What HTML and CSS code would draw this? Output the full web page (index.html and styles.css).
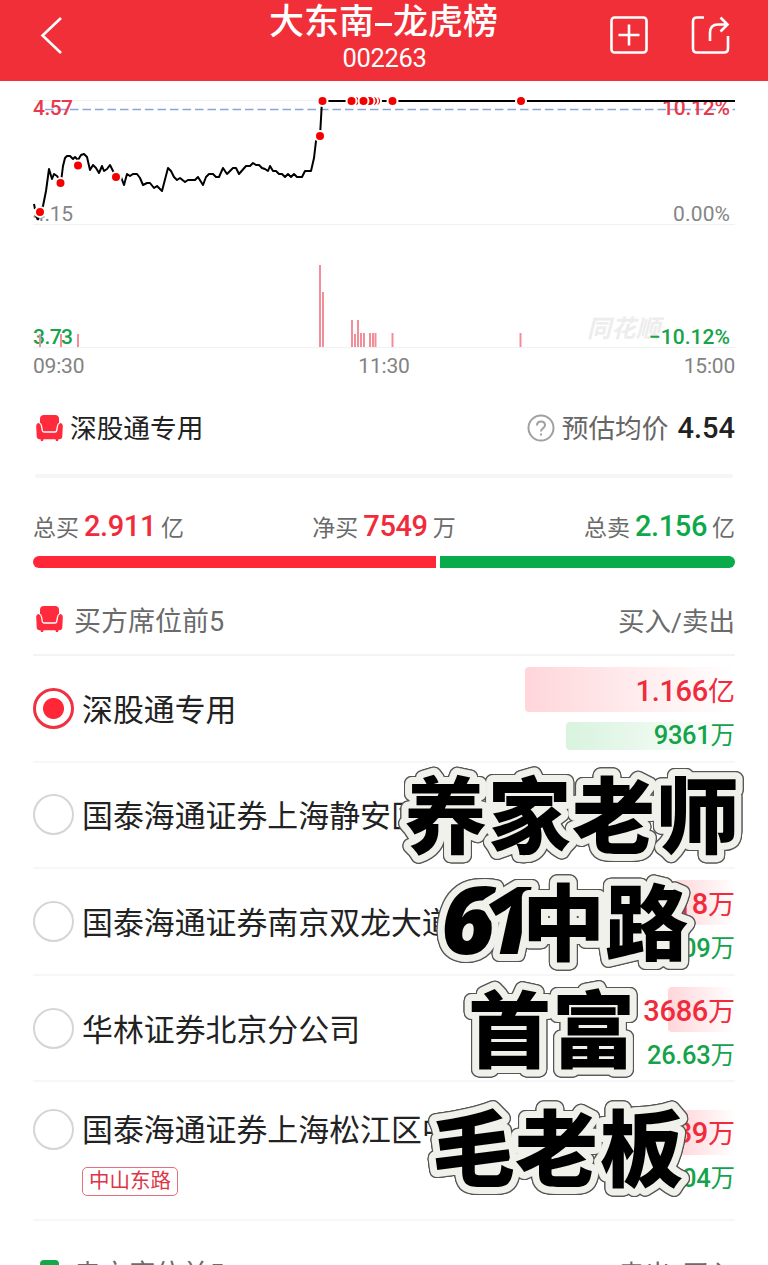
FILE: index.html
```html
<!DOCTYPE html>
<html lang="zh-CN">
<head>
    <meta charset="UTF-8">
    <meta name="viewport" content="width=device-width, initial-scale=1.0">
    <title>大东南-龙虎榜</title>
    <link rel="stylesheet" href="styles.css">
</head>
<body>

    <svg class="defs" width="0" height="0">
        <symbol id="seat" viewBox="0 0 27 27">
            <path d="M4 14V4Q4 0 8 0H19Q23 0 23 4V14L21 20H6Z"/>
            <path d="M2.500 8Q4.800 8 5.200 10L6.200 16.500H20.800L21.800 10Q22.200 8 24.500 8Q27 8.500 26.800 11.500L26.300 21.500Q26 24.300 23.500 24.300H22.500L22 26H20L19.500 24.300H7.500L7 26H5L4.500 24.300H3.500Q1 24.300 0.700 21.500L0.200 11.500Q0 8.500 2.500 8Z"/>
            <path d="M3.400 8Q5.200 8.600 5.500 11L6.300 15.500Q6.600 17 8 17H19Q20.400 17 20.700 15.500L21.500 11Q21.800 8.600 23.600 8" fill="none" stroke="#fff" stroke-width="1.300"/>
        </symbol>
    </svg>

    <header class="header">
        <svg class="back" width="24" height="40" viewBox="0 0 24 40">
            <path d="M21 3L2.500 20.500L21 38"/>
        </svg>
        <div class="title">
            <h1>大东南<span class="dash"></span>龙虎榜</h1>
            <p>002263</p>
        </div>
        <div class="actions">
            <svg width="38" height="38" viewBox="0 0 38 38">
                <rect x="1.500" y="1.500" width="35" height="35" rx="3"/>
                <path d="M8.500 19H29.500M19 8.500V29.500"/>
            </svg>
            <svg width="40" height="38" viewBox="0 0 40 38">
                <path d="M13 1.500H6Q2 1.500 2 5.500V32.500Q2 36.500 6 36.500H33Q37 36.500 37 32.500V20"/>
                <path d="M19 25V17Q19 8.500 27 8.500H36M29.500 1.500L36.500 8.500L29.500 15.500"/>
            </svg>
        </div>
    </header>

    <section class="chart">
        <svg width="768" height="269" viewBox="0 81 768 269">
            <g class="grid">
                <path d="M33 100.500H735M33 224.500H735M33 347.500H735"/>
            </g>
            <text class="mark" x="587" y="337" textLength="73">同花顺</text>
            <path class="dashed" d="M45 109.500H735"/>
            <text class="up" x="33" y="115" textLength="40">4.57</text>
            <text class="up" x="662" y="115" textLength="68">10.12%</text>
            <text x="33" y="221" textLength="40">4.15</text>
            <text x="673" y="221" textLength="57">0.00%</text>
            <text class="down" x="33" y="344" textLength="40">3.73</text>
            <text class="down" x="649" y="344" textLength="81">−10.12%</text>
            <path class="bars" d="M40 334V347M61 334V347M78 334V347M320 265V347M323 292V347M352 320V347M355 334V347M358 320V347M361 333V347M364 333V347M370 333V347M373 333V347M375.500 333V347M392.500 333V347M520.500 333V347"/>
            <path class="price" d="M34 204L35 209M36 216L38 220M38 220L40 212L43 206L46 191L49 169L52 179L54 174L57 176L61 182L63 166L65 158L67 156L70 156L73 159L75 157L78 160L81 155L84 154L87 157L90 170L93 165L96 168L99 173L102 166L104 171L107 169L110 165L113 171L116 177L121 177L124 185L127 174L130 176L133 174L137 174L140 178L143 185L147 183L150 183L154 188L157 186L162 191L168 168L171 171L174 177L177 180L180 178L185 182L188 180L195 180L198 177L203 185L206 177L209 174L213 174L216 177L219 177L223 168L227 174L233 168L236 168L239 174L246 166L250 166L253 163L256 165L259 165L262 168L265 169L268 171L270 166L273 171L276 171L279 174L282 174L285 177L288 174L291 177L294 174L297 177L302 177L305 171L311 171L314 158L316 141L320 136L322 101H735"/>
            <g class="dots">
                <circle cx="376" cy="101" r="5"/>
                <circle cx="373" cy="101" r="5"/>
                <circle cx="369.500" cy="101" r="5"/>
                <circle cx="355" cy="101" r="5"/>
                <circle cx="351.500" cy="101" r="5"/>
                <circle cx="363.500" cy="101" r="5"/>
                <circle cx="40" cy="212" r="5"/>
                <circle cx="60.500" cy="183" r="5"/>
                <circle cx="78" cy="165.500" r="5"/>
                <circle cx="116" cy="177" r="5"/>
                <circle cx="320" cy="136" r="5"/>
                <circle cx="322.500" cy="101" r="5"/>
                <circle cx="392.500" cy="101" r="5"/>
                <circle cx="521" cy="101" r="5"/>
            </g>
        </svg>
        <div class="times"><span>09:30</span><span>11:30</span><span>15:00</span></div>
    </section>

    <main class="content">
        <div class="summary">
            <svg class="seat"><use href="#seat"/></svg>
            <span>深股通专用</span>
            <div class="avg">
                <svg width="28" height="28" viewBox="0 0 28 28">
                    <circle cx="14" cy="14" r="12.500"/>
                    <path d="M10 11.500Q10 7.500 14 7.500T18 11.300Q18 13 16 14.300T14 17.500M14 19.500V21.500"/>
                </svg>
                <span>预估均价</span>
                <b>4.54</b>
            </div>
        </div>
        <div class="gap-line"></div>

        <div class="totals">
            <div>总买<b class="red">2.911</b>亿</div>
            <div>净买<b class="red">7549</b>万</div>
            <div>总卖<b class="green">2.156</b>亿</div>
        </div>
        <div class="ratio"><i class="buy"></i><i class="sell"></i></div>

        <div class="section-head">
            <svg class="seat"><use href="#seat"/></svg>
            <span>买方席位前5</span>
            <span class="right">买入/卖出</span>
        </div>

        <ul class="list">
            <li>
                <i class="radio on"></i>
                <div class="name">深股通专用</div>
                <div class="values">
                    <div class="v-buy"><i style="width:210px"></i><span><b>1.166</b>亿</span></div>
                    <div class="v-sell"><i style="width:169px"></i><span><b>9361</b>万</span></div>
                </div>
            </li>
            <li>
                <i class="radio"></i>
                <div class="name">国泰海通证券上海静安区</div>
                <div class="values">
                    <div class="v-buy"><i style="width:60px"></i><span><b>4892</b>万</span></div>
                    <div class="v-sell none"><span><b>0.00</b></span></div>
                </div>
            </li>
            <li>
                <i class="radio"></i>
                <div class="name">国泰海通证券南京双龙大道</div>
                <div class="values">
                    <div class="v-buy"><i style="width:60px"></i><span><b>4218</b>万</span></div>
                    <div class="v-sell"><span><b>25.09</b>万</span></div>
                </div>
            </li>
            <li>
                <i class="radio"></i>
                <div class="name">华林证券北京分公司</div>
                <div class="values">
                    <div class="v-buy"><i style="width:67px"></i><span><b>3686</b>万</span></div>
                    <div class="v-sell"><span><b>26.63</b>万</span></div>
                </div>
            </li>
            <li class="tall">
                <i class="radio"></i>
                <div class="name">国泰海通证券上海松江区中<em>中山东路</em></div>
                <div class="values">
                    <div class="v-buy"><i style="width:56px"></i><span><b>3139</b>万</span></div>
                    <div class="v-sell"><span><b>16.04</b>万</span></div>
                </div>
            </li>
        </ul>

        <div class="section-head sell-head">
            <svg class="seat"><use href="#seat"/></svg>
            <span>卖方席位前5</span>
            <span class="right">卖出/买入</span>
        </div>
    </main>

    <!-- 手写贴纸 -->
    <svg class="stickers" width="368" height="440" viewBox="400 765 368 440">
        <text x="404 488 572 656" y="847">养家老师</text>
        <text x="441 482 522 605" y="954"><tspan class="num">61</tspan>中路</text>
        <text x="468 552" y="1061">首富</text>
        <text x="432 515 600" y="1180">毛老板</text>
    </svg>

</body>
</html>
```
FILE: styles.css
```css
* {
    box-sizing: border-box;
    margin: 0;
    padding: 0;
}
body {
    position: relative;
    width: 768px;
    height: 1265px;
    overflow: hidden;
    background: #fff;
    color: #222;
    font-family: Roboto, "Noto Sans CJK SC", sans-serif;
}
i, em {
    font-style: normal;
}
b {
    font-weight: 500;
}
.defs {
    position: absolute;
}
.red {
    color: #f02b3c;
}
.green {
    color: #0da84a;
}

/* 顶部 */
.header {
    height: 81px;
    background: #f12f38;
    color: #fff;
    display: grid;
    grid-template-columns: 190px 1fr 190px;
    padding: 0 37px 0 40px;
}
.header svg {
    fill: none;
    stroke: #fff;
    stroke-width: 2.6;
}
.back {
    margin-top: 15px;
}
.title {
    text-align: center;
}
.title h1 {
    width: 236px;
    margin: 0 auto;
    padding-top: 5px;
    font-size: 35px;
    font-weight: 500;
    line-height: 36px;
    white-space: nowrap;
    display: flex;
    justify-content: center;
    align-items: center;
    transform: translateX(-2px);
}
.dash {
    width: 17px;
    height: 3px;
    margin: 3px 1px 0;
    background: #fff;
}
.title p {
    margin: -1px 2px 0 0;
    font-size: 25.500px;
    line-height: 36px;
    letter-spacing: -0.3px;
}
.actions {
    display: flex;
    justify-content: flex-end;
    gap: 43px;
    padding-top: 16px;
}

/* 分时图 */
.chart svg {
    display: block;
}
.chart text {
    font-size: 21px;
    fill: #858585;
}
.chart .up {
    fill: #e83a4c;
    font-weight: 500;
}
.chart .down {
    fill: #16a34a;
    font-weight: 500;
}
.chart .mark {
    font-size: 24px;
    font-weight: 700;
    font-style: italic;
    fill: #ededed;
}
.grid {
    stroke: #f1f1f1;
}
.dashed {
    stroke: #8aa4dc;
    stroke-width: 1.6;
    stroke-dasharray: 8.5 4;
}
.bars {
    stroke: #f28e98;
    stroke-width: 2;
}
.price {
    fill: none;
    stroke: #000;
    stroke-width: 2;
    stroke-linejoin: round;
}
.dots {
    fill: #f40000;
    stroke: #fff;
    stroke-width: 2;
}
.times {
    display: flex;
    justify-content: space-between;
    padding: 0 33px;
    font-size: 21px;
    line-height: 32px;
    letter-spacing: -0.2px;
    color: #828282;
}

/* 内容 */
.content {
    padding: 0 33px;
}
.seat {
    width: 27px;
    height: 27px;
    margin-left: 3px;
    fill: #ff2a3c;
}
.summary {
    display: flex;
    align-items: center;
    height: 40px;
    margin-top: 26px;
    font-size: 26.700px;
}
.summary span {
    margin-left: 7px;
    padding-bottom: 4px;
}
.avg {
    display: flex;
    align-items: center;
    margin-left: auto;
    color: #666;
}
.avg svg {
    fill: none;
    stroke: #a0a0a0;
    stroke-width: 2;
}
.avg b {
    font-size: 29px;
    color: #222;
    margin-left: 9px;
}
.gap-line {
    height: 4px;
    margin: 26px 2px 0;
    border-radius: 2px;
    background: #f6f6f6;
}
.totals {
    display: flex;
    justify-content: space-between;
    height: 40px;
    margin-top: 28px;
    line-height: 40px;
    font-size: 23px;
    color: #6b6b6b;
}
.totals b {
    font-size: 29px;
    letter-spacing: -0.4px;
    margin: 0 5px;
}
.ratio {
    display: flex;
    gap: 4px;
    height: 12px;
    margin-top: 10px;
}
.ratio .buy {
    width: 403px;
    background: #ff2738;
    border-radius: 6px 0 0 6px;
}
.ratio .sell {
    flex: 1;
    background: #0aab4b;
    border-radius: 0 6px 6px 0;
}
.section-head {
    display: flex;
    align-items: center;
    height: 71px;
    margin-top: 17px;
    border-bottom: 2px solid #f4f4f4;
    font-size: 27px;
    color: #6b6b6b;
}
.section-head span {
    margin-left: 11px;
    padding-bottom: 1px;
}
.section-head .right {
    margin-left: auto;
    font-size: 26.500px;
}
.list {
    list-style: none;
}
.list li {
    display: flex;
    align-items: center;
    height: 106.600px;
    border-bottom: 2px solid #f7f7f7;
}
.list .tall {
    height: 139px;
}
.radio {
    flex: none;
    width: 41px;
    height: 41px;
    border: 2px solid #d5d5d5;
    border-radius: 50%;
}
.radio.on {
    border: 3px solid #f03142;
    background: radial-gradient(#ff2637 10px, #fff 11px);
}
.tall .radio {
    margin-bottom: 42px;
}
.name {
    width: 372px;
    margin-left: 8px;
    padding-top: 5px;
    font-size: 30.900px;
    line-height: 40px;
    white-space: nowrap;
}
.name em {
    display: block;
    width: 96px;
    height: 29px;
    margin-top: 16px;
    border: 1px solid #e4707a;
    border-radius: 5px;
    font-size: 20.500px;
    line-height: 27px;
    text-align: center;
    color: #dd3545;
}
.values {
    width: 210px;
    margin-left: auto;
}
.v-buy, .v-sell {
    display: grid;
    justify-items: end;
    align-items: center;
}
.v-buy > *, .v-sell > * {
    grid-area: 1 / 1;
}
.v-buy {
    height: 45px;
    font-size: 27px;
    color: #f02b3c;
}
.v-buy i {
    height: 45px;
    border-radius: 4px;
    background: linear-gradient(90deg, #ffd6da, #fff);
}
.v-buy span {
    padding-bottom: 1px;
}
.v-buy b {
    font-size: 29px;
    letter-spacing: -0.3px;
}
.v-sell {
    height: 28px;
    margin-top: 9px;
    font-size: 24.500px;
    line-height: 28px;
    color: #14a34b;
}
.v-sell i {
    height: 28px;
    border-radius: 4px;
    background: linear-gradient(90deg, #d8f3de, #fff);
}
.v-sell b {
    font-size: 25.500px;
    letter-spacing: -0.3px;
}
.v-sell.none {
    color: #777;
}
.sell-head {
    height: 72px;
}
.sell-head .seat {
    fill: #12a84b;
}

/* 贴纸 */
.stickers {
    position: absolute;
    left: 400px;
    top: 765px;
    overflow: visible;
    filter: drop-shadow(1px 0 0 #555) drop-shadow(-1px 0 0 #555) drop-shadow(0 1px 0 #555) drop-shadow(0 -1px 0 #555);
}
.stickers text {
    font-family: "Noto Sans CJK SC", sans-serif;
    font-size: 83px;
    font-weight: 900;
    fill: #000;
    stroke: #f1f1ec;
    stroke-width: 14;
    stroke-linejoin: round;
    paint-order: stroke;
}
.stickers .num {
    font-family: "Open Sans", sans-serif;
    font-size: 94px;
    font-weight: 800;
    font-style: italic;
}
```
